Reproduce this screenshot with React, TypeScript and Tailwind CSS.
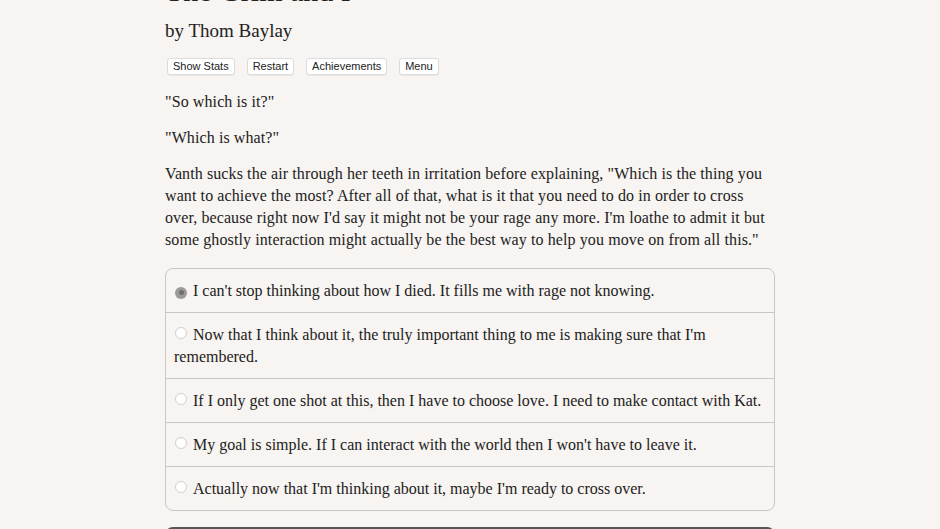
import React, { useState } from 'react';

const choices = [
  "I can't stop thinking about how I died. It fills me with rage not knowing.",
  "Now that I think about it, the truly important thing to me is making sure that I'm remembered.",
  'If I only get one shot at this, then I have to choose love. I need to make contact with Kat.',
  "My goal is simple. If I can interact with the world then I won't have to leave it.",
  "Actually now that I'm thinking about it, maybe I'm ready to cross over.",
];

const buttons = ['Show Stats', 'Restart', 'Achievements', 'Menu'];

const App: React.FC = () => {
  const [selected, setSelected] = useState(0);

  return (
    <div className="min-h-screen bg-[#f7f4f1] text-[#222] overflow-hidden">
      <div className="mx-auto w-[610px] font-['Liberation_Serif',serif]">
        <h1 className="text-[30px] leading-[30px] mt-[-24px]">The Grim and I</h1>
        <h2 className="text-[19px] leading-[24px] mt-[13px]">by Thom Baylay</h2>

        <div className="flex gap-[12px] mt-[15px] pl-[2px] font-['Liberation_Sans',sans-serif]">
          {buttons.map((b) => (
            <button
              key={b}
              className="h-[17px] px-[5px] text-[11px] leading-[15px] text-[#222] bg-white border border-[#dcdcdc] rounded-[3px] shadow-[0_1px_1px_rgba(0,0,0,0.06)]"
            >
              {b}
            </button>
          ))}
        </div>

        <div className="text-[16px] tracking-[0.1px] leading-[22px] mt-[16px] space-y-[14px]">
          <p>"So which is it?"</p>
          <p>"Which is what?"</p>
          <p>
            Vanth sucks the air through her teeth in irritation before explaining, "Which is the thing you want
            to achieve the most? After all of that, what is it that you need to do in order to cross over, because
            right now I'd say it might not be your rage any more. I'm loathe to admit it but some ghostly
            interaction might actually be the best way to help you move on from all this."
          </p>
        </div>

        <ul className="mt-[17px] border border-[#c9c6c3] rounded-[8px] text-[16px] leading-[22px]">
          {choices.map((c, i) => (
            <li
              key={i}
              onClick={() => setSelected(i)}
              className={`pl-[8px] pr-[4px] pt-[11px] pb-[10px] cursor-pointer ${i > 0 ? 'border-t border-[#c9c6c3]' : ''}`}
            >
              <span className="inline-flex align-[1px] mr-[6px] ml-[1px]">
                {selected === i ? (
                  <span className="w-[12px] h-[12px] rounded-full bg-[#9a9a9a] flex items-center justify-center">
                    <span className="w-[5px] h-[5px] rounded-full bg-[#6f6f6f]" />
                  </span>
                ) : (
                  <span className="w-[12px] h-[12px] rounded-full bg-white border border-[#cfcfcf]" />
                )}
              </span>
              {c}
            </li>
          ))}
        </ul>

        <div className="mt-[16px] h-[40px] rounded-[8px] bg-[#555555]" />
      </div>
    </div>
  );
};

export default App;
